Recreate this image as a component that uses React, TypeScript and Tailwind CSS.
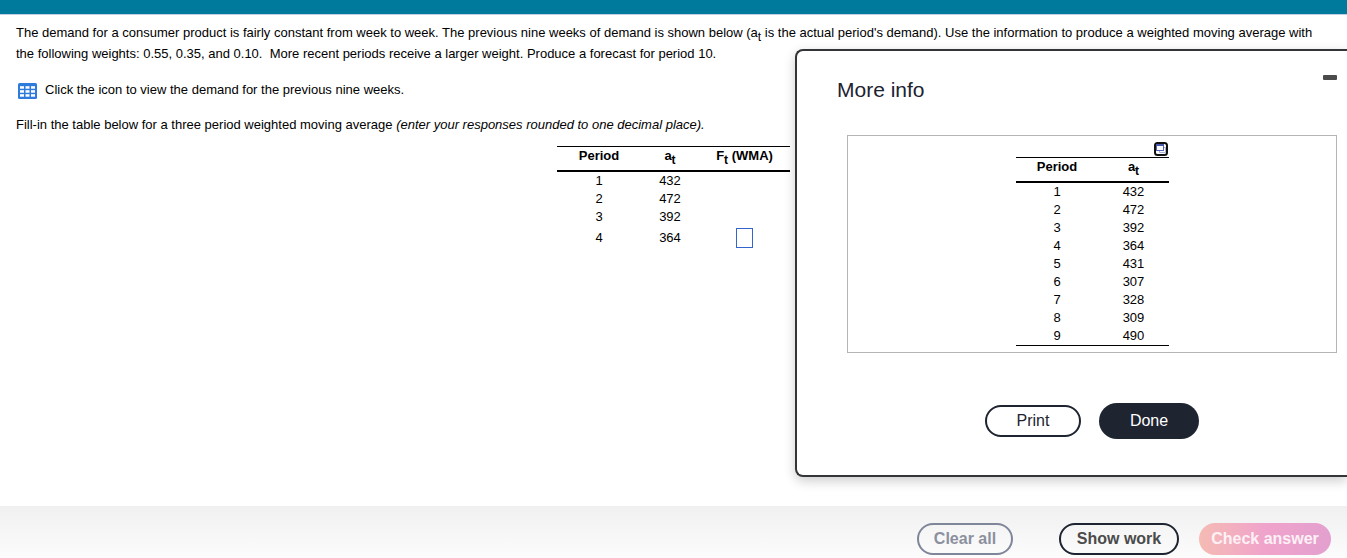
import React from "react";

const nineWeeks = [432, 472, 392, 364, 431, 307, 328, 309, 490];

function Sub({ children }: { children: React.ReactNode }) {
  return <sub className="relative bottom-auto align-sub text-xs leading-none">{children}</sub>;
}

function GridIcon() {
  return (
    <svg width="19" height="16" viewBox="0 0 19 16" aria-hidden="true">
      <rect width="19" height="16" rx="1.5" fill="#2f7bdc" />
      <g fill="#fff">
        {[3.2, 7.2, 11.2].map((y) =>
          [2, 7.5, 13].map((x) => <rect key={`${x}-${y}`} x={x} y={y} width="4" height="2.5" />)
        )}
      </g>
    </svg>
  );
}

function PopupIcon() {
  return (
    <svg width="14" height="14" viewBox="0 0 14 14" aria-hidden="true">
      <rect x="1" y="1" width="12" height="12" rx="2.5" fill="#fff" stroke="#111" strokeWidth="2" />
      <path d="M10 5.5H11.5V10.5H5.5V9" fill="none" stroke="#a9b2dc" />
      <rect x="2.5" y="2.5" width="7" height="6" fill="#fff" stroke="#5563b0" />
      <rect x="2" y="2" width="8" height="2" fill="#4a58ab" />
    </svg>
  );
}

function DemandTable() {
  return (
    <table className="mx-auto border-collapse text-center text-[13px]">
      <thead>
        <tr className="h-6 border-t border-b-2 border-black align-top leading-[18px]">
          <th className="w-[84px] p-0">Period</th>
          <th className="w-[58px] p-0">a<Sub>t</Sub></th>
          <th className="w-[91px] p-0">F<Sub>t</Sub> (WMA)</th>
        </tr>
      </thead>
      <tbody className="leading-[18px]">
        {nineWeeks.slice(0, 3).map((demand, i) => (
          <tr key={i}>
            <td className="p-0">{i + 1}</td>
            <td className="p-0">{demand}</td>
            <td className="p-0"></td>
          </tr>
        ))}
        <tr className="h-6">
          <td className="p-0">4</td>
          <td className="p-0">364</td>
          <td className="p-0">
            <input
              aria-label="Forecast for period 4"
              className="mx-auto block h-5 w-[17px] border border-[#3366cc] bg-white text-center outline-none"
            />
          </td>
        </tr>
      </tbody>
    </table>
  );
}

function MoreInfo() {
  return (
    <section
      role="dialog"
      aria-labelledby="more-info-title"
      className="absolute top-[49px] right-0 w-[552px] rounded-l-lg border-2 border-r-0 border-[#333536] bg-white pr-[10px] pb-9 shadow-[0_4px_12px_rgba(0,0,0,0.2)]"
    >
      <div className="flex items-start justify-between pt-6 pl-10">
        <h2 id="more-info-title" className="text-[21px] leading-[30px] text-[#1c2230]">More info</h2>
        <button aria-label="Minimize" className="flex h-4 w-[14px] items-start">
          <span className="h-[5px] w-[14px] rounded-[1px] bg-[#4b4b4b]"></span>
        </button>
      </div>
      <div className="mt-[30px] ml-[50px] border border-[#b5b5b5] pt-[6px] pb-[6px]">
        <div className="mx-auto w-[153px]">
          <div className="flex justify-end pr-px pb-px">
            <button aria-label="Open table in a new window" className="block"><PopupIcon /></button>
          </div>
          <table className="w-full border-collapse border-b border-black text-center text-[13px]">
            <thead>
              <tr className="h-6 border-t border-b-2 border-black align-top leading-[18px]">
                <th className="w-[83px] p-0">Period</th>
                <th className="p-0">a<Sub>t</Sub></th>
              </tr>
            </thead>
            <tbody className="leading-[18px]">
              {nineWeeks.map((demand, i) => (
                <tr key={i}>
                  <td className="p-0">{i + 1}</td>
                  <td className="p-0">{demand}</td>
                </tr>
              ))}
            </tbody>
          </table>
        </div>
      </div>
      <div className="mt-[50px] ml-[50px] flex items-center justify-center gap-[18px] text-base">
        <button className="h-8 w-24 rounded-full border-2 border-[#1e2430] bg-white leading-none text-[#1e2430]">Print</button>
        <button className="h-9 w-[100px] rounded-full bg-[#1e2430] leading-none text-white">Done</button>
      </div>
    </section>
  );
}

export default function App() {
  return (
    <div className="relative flex min-h-screen flex-col overflow-hidden bg-white font-['Liberation_Sans',Arial,sans-serif] text-black">
      <header className="h-[15px] border-b border-[#c3cee0] bg-[#007a9c]"></header>
      <main className="flex-1 px-4 pt-[7px] text-[13px] leading-[21px]">
        <p>
          The demand for a consumer product is fairly constant from week to week. The previous nine weeks of demand is
          shown below (a<Sub>t</Sub> is the actual period's demand). Use the information to produce a weighted moving
          average with the following weights: 0.55, 0.35, and 0.10.&nbsp; More recent periods receive a larger weight.
          Produce a forecast for period 10.
        </p>
        <p className="mt-[15px] flex items-center">
          <button aria-label="View demand data" className="mt-[2px] ml-[2px] mr-2"><GridIcon /></button>
          Click the icon to view the demand for the previous nine weeks.
        </p>
        <p className="mt-[14px] mb-[11px]">
          Fill-in the table below for a three period weighted moving average{" "}
          <i>(enter your responses rounded to one decimal place).</i>
        </p>
        <DemandTable />
      </main>
      <MoreInfo />
      <footer className="flex h-[52px] items-start justify-end bg-linear-to-b from-[#f0f0f0] to-[#fcfcfc] pt-[17px] pr-4 text-base leading-none font-bold">
        <button className="h-8 w-24 rounded-full border-2 border-[#80869a] text-[#8b909e]">Clear all</button>
        <button className="mr-5 ml-[46px] h-8 w-[120px] rounded-full border-2 border-[#1e2430] text-[#4b4b4b]">Show work</button>
        <button className="h-8 w-[132px] rounded-full bg-linear-to-r from-[#f5bbb3] via-[#f0a3cb] to-[#e3a0cf] text-[#fdf1f6]">Check answer</button>
      </footer>
    </div>
  );
}
